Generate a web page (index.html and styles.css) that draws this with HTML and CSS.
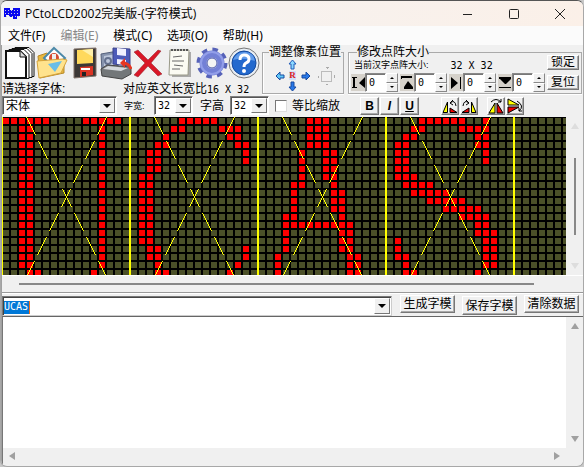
FILE: index.html
```html
<!DOCTYPE html>
<html lang="zh-CN">
<head>
<meta charset="utf-8">
<title>PCtoLCD2002完美版-(字符模式)</title>
<link rel="stylesheet" href="styles.css">
</head>
<body>
<div class="window">
  <header class="titlebar">
    <svg class="app-icon" width="16" height="13" viewBox="0 0 16 13" shape-rendering="crispEdges" aria-hidden="true">
      <path fill="#0808f0" d="M0 1h6v7H2v2H0zM5 3h5v7H5zM9 1h7v8h-3v3H9z"/>
      <path stroke="#ccd" stroke-width="1" stroke-dasharray="1 2" d="M1 3.500h14M1 6.500h14M2 9.500h13"/>
    </svg>
    <h1>PCtoLCD2002完美版-(字符模式)</h1>
    <div class="caption-buttons">
      <button aria-label="最小化"><svg width="12" height="12"><path d="M1 6.500h9"/></svg></button>
      <button aria-label="最大化"><svg width="12" height="12"><rect x="1.500" y="1.500" width="9" height="9" rx="1"/></svg></button>
      <button aria-label="关闭"><svg width="12" height="12"><path d="M1 1l10 10M11 1L1 11"/></svg></button>
    </div>
  </header>
  <nav class="menubar">
    <button>文件(F)</button><button disabled>编辑(E)</button><button>模式(C)</button><button>选项(O)</button><button>帮助(H)</button>
  </nav>

  <main class="client">
    <section class="tools">
      <div class="tools-left">
        <div class="icon-row">
          <button aria-label="新建"><svg viewBox="0 0 32 34"><g fill="#fff" stroke="#111"><path d="M11 1.500h14l5 5v24H11z"/><path d="M8 2.500h15l5 5v24H8z"/><path d="M5 3.500h15l5 5v24H5z"/><path stroke-width="2" d="M2 5h14l6 6v21H2z"/><path fill="#ddd" d="M16 5v6h6"/></g></svg></button>
          <button aria-label="打开"><svg viewBox="0 0 32 34"><path fill="#e8b840" stroke="#b88a28" d="M2 10l9-3 3 3h12l2 3v14L4 32z"/><path fill="#fff" stroke="#4c89a8" stroke-width="2" d="M18 2l11 10-11 11L8 12z"/><circle cx="18" cy="12" r="5" fill="#d64c32"/><path fill="#eee" d="M16 8h4v8h-4z"/><path fill="#ffe38d" stroke="#d5a33c" d="M1 15l26-2 4 1-6 13-22 5z"/><path fill="#69bde8" d="M12 18l14-3-7 11z"/></svg></button>
          <button aria-label="保存"><svg viewBox="0 0 32 34"><path fill="#3c3836" stroke="#81736a" d="M6 3l22-1v28L6 32z"/><path fill="#ffd95c" d="M9 4l16-1v14l-16 1z"/><path fill="#fff0a8" d="M14 4l11-1v8z"/><path fill="#db3424" d="M12 21l13-1v9l-13 2z"/><path fill="#fff" d="M13 22h9v2h-9z"/><path fill="#222" d="M14 26h4v4h-4z"/></svg></button>
          <button aria-label="另存"><svg viewBox="0 0 32 34"><path fill="#8794ae" stroke="#55617c" d="M1 8l17-3v18L2 25z"/><path fill="#bdc7db" d="M4 10l12-2v12L4 22z"/><circle cx="8" cy="15" r="3" fill="none" stroke="#64718f" stroke-width="2"/><path fill="#737779" stroke="#444" d="M1 23l6-4 24 2v7l-9 5-20-3z"/><path fill="#d5d9dd" d="M3 23l5-3 20 2-7 3z"/><path fill="#4d5bb9" stroke="#3b438b" d="M13 2l17 1v17l-17-2z"/><path fill="#f0f0ff" d="M17 2l9 1v7l-9-1zM17 13l9 1v5l-9-1z"/><path fill="none" stroke="#e73722" stroke-width="3" d="M31 23q-2-6-9-6"/><path fill="#e73722" d="M20 17l5-5v10z"/></svg></button>
          <button aria-label="删除"><svg viewBox="0 0 32 34"><path fill="#d91828" stroke="#8c2028" stroke-width=".5" d="M2 6l4-2 10 10L26 4l3 1-10 12 11 11-4 2-10-10L6 31l-4-2 11-12z"/></svg></button>
          <button aria-label="预览"><svg viewBox="0 0 32 34"><path fill="#aaa" d="M8 6h19v25H8z"/><path fill="#fbfbf3" stroke="#998" d="M6 4h19l-1 25H5z"/><path fill="none" stroke="#555" stroke-width="2" stroke-dasharray="2 1" d="M7 4h17"/><path stroke="#666" d="M9 11l9-1M8 15h12M10 19l9 1M8 23h8"/></svg></button>
          <button aria-label="设置"><svg viewBox="0 0 32 34"><circle cx="16" cy="17" r="13" fill="none" stroke="#5662b8" stroke-width="5" stroke-dasharray="5.210 5"/><circle cx="16" cy="17" r="9" fill="none" stroke="#7380d6" stroke-width="7"/><circle cx="16" cy="17" r="11" fill="none" stroke="#929ee9" stroke-width="2"/><circle cx="16" cy="17" r="5" fill="#f4f4f4" stroke="#4b59ac"/></svg></button>
          <button aria-label="帮助"><svg viewBox="0 0 32 34"><circle cx="16" cy="17" r="15" fill="#e7edf4" stroke="#777"/><circle cx="16" cy="17" r="12" fill="#2369ce" stroke="#144a9f"/><path fill="#619bea" d="M5 14Q9 5 18 6q8 1 9 9-12-4-22-1z"/><path fill="none" stroke="#fff" stroke-width="3" d="M12 14q0-5 4-5 5 0 5 4 0 3-3 4-2 1-2 4"/><circle cx="16" cy="25" r="2" fill="#fff"/></svg></button>
        </div>
        <div class="label-row"><label for="font">请选择字体:</label><span>对应英文长宽比<span class="digits">16 X 32</span></span></div>
        <div class="select-row">
          <span class="combo combo-font"><select id="font"><option>宋体</option></select><i class="drop"></i></span>
          <label class="small" for="cw">字宽:</label>
          <span class="combo combo-size"><select id="cw" class="digits"><option>32</option></select><i class="drop"></i></span>
          <label class="high" for="ch">字高</label>
          <span class="combo combo-size"><select id="ch" class="digits"><option>32</option></select><i class="drop"></i></span>
        </div>
      </div>

      <div class="tools-right">
        <div class="groups">
          <fieldset class="position">
            <legend>调整像素位置</legend>
            <div class="position-body">
              <div class="pad">
                <button class="up" aria-label="上移"><svg width="9" height="11"><path fill="#8bd8ff" stroke="#205bb8" d="M4.500 1L8 5H6v5H3V5H1z"/></svg></button>
                <button class="left" aria-label="左移"><svg width="10" height="10"><path fill="#60c8f8" stroke="#174aa0" d="M1 5l4-4v3h4v3H5v2z"/></svg></button>
                <button class="reset" aria-label="重置">R</button>
                <button class="right" aria-label="右移"><svg width="10" height="10"><path fill="#2878e8" stroke="#174aa0" d="M9 5L5 1v3H1v3h4v2z"/></svg></button>
                <button class="down" aria-label="下移"><svg width="9" height="11"><path fill="#2878e8" stroke="#174aa0" d="M4.500 10L1 6h2V1h3v5h2z"/></svg></button>
              </div>
              <svg width="20" height="20" shape-rendering="crispEdges"><rect x="4.500" y="5.500" width="10" height="10" fill="none" stroke="#bbb"/><path fill="#aaa" d="M8 1h4l-2 2zM9 18h2v1H9zM1 10h1v2H1zM17 9h1v3h-1z"/></svg>
            </div>
          </fieldset>
          <fieldset class="matrix">
            <legend>修改点阵大小</legend>
            <div class="matrix-main">
              <div class="matrix-info"><span class="small">当前汉字点阵大小:</span><span class="digits">32 X 32</span></div>
              <div class="spinners">
                <div class="spinner"><svg width="14" height="17"><path d="M1 3h5v1H4v9h2v1H1v-1h1V4H1zM14 3v11L8 9z"/></svg><input aria-label="左" class="digits" value="0"><span class="spin"><button aria-label="左加"></button><button aria-label="左减"></button></span></div>
                <div class="spinner"><svg width="14" height="17"><path d="M1 2h11v2H2v1H1zM8 7l5 6v2H4v-2z"/></svg><input aria-label="上" class="digits" value="0"><span class="spin"><button aria-label="上加"></button><button aria-label="上减"></button></span></div>
                <div class="spinner"><svg width="14" height="17"><path d="M2 3l7 6-7 6zM11 3h1v12h-1z"/></svg><input aria-label="右" class="digits" value="0"><span class="spin"><button aria-label="右加"></button><button aria-label="右减"></button></span></div>
                <div class="spinner"><svg width="14" height="17"><path d="M1 3h12v2l-5 5H7L2 5H1zM1 13h12v1H1z"/></svg><input aria-label="下" class="digits" value="0"><span class="spin"><button aria-label="下加"></button><button aria-label="下减"></button></span></div>
              </div>
            </div>
            <div class="matrix-actions"><button class="btn">锁定</button><button class="btn">复位</button></div>
          </fieldset>
        </div>
        <div class="format-row">
          <label class="scale"><input type="checkbox">等比缩放</label>
          <div class="styles"><button class="btn"><b>B</b></button><button class="btn"><i>I</i></button><button class="btn"><u>U</u></button></div>
          <div class="pair">
            <button class="btn" aria-label="左旋"><svg width="16" height="16"><path fill="#ff0" stroke="#000" d="M1 14.500L5.500 4v10.500z"/><path fill="#e00" stroke="#000" d="M8 14.500V10l7 4.500z"/><path fill="none" stroke="#000" d="M8 5q5-4 6 3M11 2L8 5l3 2"/></svg></button>
            <button class="btn" aria-label="右旋"><svg width="16" height="16"><path fill="#ff0" stroke="#000" d="M15 14.500L10.500 4v10.500z"/><path fill="#e00" stroke="#000" d="M8 14.500V10l-7 4.500z"/><path fill="none" stroke="#000" d="M8 5Q3 1 2 8M5 2l3 3-3 2"/></svg></button>
          </div>
          <div class="pair">
            <button class="btn" aria-label="左右翻转"><svg width="16" height="16"><path fill="#ff0" stroke="#000" d="M1 15L7 5v10z"/><path fill="#e00" stroke="#000" d="M15 15L9 5v10z"/><path fill="none" stroke="#000" d="M3 4q5-5 10 0M13 1v3h-3"/></svg></button>
            <button class="btn" aria-label="上下翻转"><svg width="16" height="16"><path fill="#ff0" stroke="#000" d="M1 1l11 6H1z"/><path fill="#e00" stroke="#000" d="M1 15l11-6H1z"/><path fill="none" stroke="#000" d="M10 3q8 5 2 10M12 10v3h3"/></svg></button>
          </div>
        </div>
      </div>
    </section>

    <section class="preview">
      <svg id="lcd" class="lcd" shape-rendering="crispEdges" role="img" aria-label="UCAS 点阵"></svg>
      <div class="vscroll faint"><i class="tri up-tri"></i><div class="vthumb"></div><i class="tri down-tri"></i></div>
    </section>
    <div class="hscroll-thin"><div class="hthumb"></div></div>

    <section class="entry">
      <div class="text-combo"><label class="caret-text"><input class="digits" id="text" value="UCAS" size="4" aria-label="文字"></label><button class="arrow-button" aria-label="历史"><i class="drop-tri"></i></button></div>
      <button class="btn action">生成字模</button>
      <button class="btn action lower">保存字模</button>
      <button class="btn action">清除数据</button>
    </section>

    <section class="output">
      <textarea aria-label="字模数据"></textarea>
      <div class="vscroll"><i class="tri up-tri"></i><i class="tri down-tri"></i></div>
      <div class="hscroll"><i class="tri left-tri"></i><i class="tri right-tri"></i></div>
    </section>
  </main>
</div>
<script src="lcd.js"></script>
</body>
</html>
```
FILE: styles.css
```css
* { box-sizing: border-box; }
body {
  margin: 0;
  background: #c8c8c8;
  font: 12px/14px "Liberation Sans", "Noto Sans CJK SC", sans-serif;
  color: #000;
}
button, input, select, textarea { font: inherit; color: inherit; margin: 0; padding: 0; border: 0; border-radius: 0; background: none; }
button { display: grid; place-items: center; }
svg { display: block; }
.digits { font-family: "DejaVu Sans Mono", monospace; font-size: 10px; }
.small { font-size: 9px; }

.window {
  display: flex;
  flex-direction: column;
  min-height: 100vh;
  border: 1px solid #a8a8a8;
  border-top-color: #555;
  border-radius: 7px;
  overflow: hidden;
  background: #f0f0f0;
}
.titlebar { display: flex; align-items: center; height: 25px; padding-left: 3px; gap: 5px; background: linear-gradient(90deg, #f3f3f4, #fbf0e8); }
.titlebar h1 { flex: 1; margin: 0; font: 12px/20px "Open Sans", "Noto Sans CJK SC", sans-serif; white-space: nowrap; }
.caption-buttons { display: flex; }
.caption-buttons button { width: 46px; height: 24px; }
.caption-buttons svg { fill: none; stroke: #222; }
.menubar { display: flex; gap: 15px; height: 19px; padding-left: 7px; background: #fbfbfb; }
.menubar button { font-family: "Noto Sans", "Noto Sans CJK SC", sans-serif; white-space: nowrap; }
.menubar button:disabled { color: #888; }

.client { flex: 1; display: flex; flex-direction: column; border-left: 1px solid #a0a0a0; }
.tools { display: flex; height: 72px; }
.tools-left { width: 260px; flex: none; }
.icon-row { display: flex; height: 36px; padding-left: 2px; }
.icon-row button { width: 32px; height: 36px; }
.icon-row svg { width: 32px; height: 34px; }
.label-row { display: flex; height: 15px; gap: 56px; padding-top: 1px; white-space: nowrap; }
.label-row > :first-child { width: 65px; }
.select-row { display: flex; align-items: center; height: 19px; }
.select-row > * { flex: none; }
.select-row .small, .select-row .high { width: 37px; padding-left: 7px; white-space: nowrap; }
.combo { display: grid; height: 19px; background: #fff; border: 1px solid; border-color: #808080 #fff #fff #808080; box-shadow: inset 1px 1px #555; }
.combo > * { grid-area: 1 / 1; }
.combo select { appearance: none; width: 100%; padding-left: 3px; }
.combo-font { width: 115px; }
.combo-size { width: 39px; }
.drop { pointer-events: none; justify-self: end; width: 16px; margin: 1px; background: #f0f0f0; border: 1px solid; border-color: #fff #777 #777 #fff; display: grid; place-items: center; }
.drop::after, .drop-tri { content: ""; border: 4px solid transparent; border-top-color: #000; border-bottom: 0; }

.tools-right { flex: 1; min-width: 0; }
.groups { display: flex; gap: 4px; height: 49px; }
fieldset { margin: 0; padding: 0 2px; min-width: 0; border: 1px solid #aaa; box-shadow: inset 1px 0 #fff, 0 1px #fff; }
legend { margin-left: 6px; padding: 0; height: 14px; white-space: nowrap; }
.position { width: 82px; flex: none; }
.position legend { margin-left: 4px; }
.position-body { display: flex; align-items: center; gap: 5px; padding-left: 8px; }
.pad { display: grid; grid-template: 11px 11px 11px / 13px 13px 13px; place-items: center; }
.up { grid-area: 1 / 2; }
.left { grid-area: 2 / 1; }
.reset { grid-area: 2 / 2; font: bold 9px/9px "Liberation Serif", serif; color: #d22; background: #cfe0fa; }
.right { grid-area: 2 / 3; }
.down { grid-area: 3 / 2; }
.matrix { flex: 1; display: grid; grid-template-columns: 1fr 32px; margin-right: 1px; }
.matrix-main { min-width: 0; }
.matrix-info { display: flex; height: 14px; gap: 22px; padding-left: 3px; white-space: nowrap; }
.matrix-info .small { line-height: 12px; }
.spinners { display: flex; justify-content: space-between; padding-right: 1px; }
.spinner { display: flex; align-items: center; height: 19px; width: 48px; }
.spinner svg { background: #d5d1ca; }
.spinner input { width: 21px; height: 19px; padding-left: 3px; background: #fff; border: 1px solid #888; border-right-color: #fff; border-bottom-color: #fff; box-shadow: inset 1px 1px #777; }
.spin { display: grid; width: 12px; height: 19px; }
.spin button { border: 1px solid; border-color: #fff #888 #888 #fff; background: #f0f0f0; }
.spin button::after { content: ""; border: 2px solid transparent; border-bottom-color: #000; border-top: 0; }
.spin button:last-child::after { border-top: 2px solid #000; border-bottom: 0; }
.matrix-actions { display: grid; align-content: start; gap: 5px; margin-top: -4px; }
.btn { background: #f0f0f0; border: 1px solid; border-color: #fff #777 #777 #fff; box-shadow: inset -1px -1px #aaa; white-space: nowrap; overflow: hidden; }
.matrix-actions .btn { height: 15px; line-height: 13px; }
.format-row { display: flex; align-items: center; height: 23px; }
.scale { display: flex; align-items: center; gap: 5px; width: 98px; padding-left: 13px; white-space: nowrap; }
.scale input { appearance: none; width: 12px; height: 12px; background: #fff; border: 1px solid; border-color: #777 #ddd #ddd #777; }
.styles { display: flex; gap: 1px; width: 81px; }
.styles .btn { width: 19px; height: 18px; font-weight: bold; }
.pair { display: flex; gap: 1px; width: 46px; }
.pair .btn { width: 18px; height: 18px; }

.preview { display: grid; grid-template-columns: 1fr 17px; height: 158px; }
.lcd { width: 100%; height: 158px; background: #000; }
.vscroll { display: flex; flex-direction: column; align-items: center; justify-content: space-between; padding: 6px 0; background: #f0f0f0; }
.tri { border: 4px solid transparent; }
.up-tri { border-top: 0; border-bottom: 6px solid #a0a0a0; }
.down-tri { border-bottom: 0; border-top: 6px solid #a0a0a0; }
.left-tri { border-left: 0; border-right: 6px solid #a0a0a0; }
.right-tri { border-right: 0; border-left: 6px solid #a0a0a0; }
.faint .tri { border-bottom-color: #ddd; }
.faint .down-tri { border-top-color: #ddd; }
.vthumb { width: 2px; height: 77px; background: #888; }
.hscroll-thin { height: 18px; border-top: 1px solid #fff; border-bottom: 1px solid #999; padding: 7px 49px 0 17px; }
.hthumb { height: 2px; background: #888; }

.entry { display: flex; align-items: flex-start; height: 23px; padding: 1px 4px 0 0; border-top: 1px solid #fff; gap: 7px; }
.text-combo { flex: 1; display: flex; justify-content: space-between; height: 20px; margin: 1px 1px 0 0; background: #fff; border: 1px solid #777; border-right-color: #ccc; border-bottom-color: #ccc; box-shadow: inset 1px 1px #444; }
.caret-text { padding: 2px 1px; }
.caret-text input { width: 26px; height: 13px; background: #0078d7; color: #fff; border-right: 1px solid #f07020; }
.arrow-button { width: 16px; margin: 1px; background: #f0f0f0; border: 1px solid; border-color: #fff #777 #777 #fff; }
.action { width: 55px; height: 18px; flex: none; line-height: 16px; }
.lower { margin-top: 1px; height: 19px; }

.output { flex: 1; display: grid; grid-template: 1fr 16px / 1fr 17px; min-height: 100px; border-top: 1px solid #666; border-left: 1px solid #777; background: #f0f0f0; margin-bottom: 2px; }
.output textarea { display: block; width: 100%; height: 100%; min-height: 0; background: #fff; resize: none; overflow: hidden; }
.hscroll { display: flex; align-items: center; justify-content: space-between; padding: 0 6px; }
```
FILE: lcd.js
```javascript
// Lit columns of every visible row, one list per character.
const glyphs = [
  ["0-5,10-14", ...Array(18).fill("2-3,12"), "3-4,11"],
  ["6-10", "5-6,11-13", "4,12-13", "3-4,13-14", "2-3,14", "2-3,14", "2-3",
    ...Array(9).fill("1-2"), "2-3,14", "2-3,14", "3,13", "3-4,12"],
  ["6-8", "6-8", "6-8", "6-8", "5,8-9", "5,8-9", "5,8-9", "5,8-9", "4-5,9",
    "4,9-10", "4,9-10", "4,9-10", "3-4,10", "3-11", "3,10-11", "3,10-11",
    "3,10-11", "2,11-12", "2,11-12", "2,11-12"],
  ["4-9,12", "3-4,9-12", "2-3,11-12", "1-2,11-12", "1-2,12", "1-2,12", "1-2",
    "1-3", "2-5", "3-7", "5-9", "7-11", "9-12", "11-12", "11-13", "1,12-13",
    "1,12-13", "1-2,12-13", "2,12-13", "2-3,11"]
];
const pitch = 8;
const charWidth = 16 * pitch;
const ns = "http://www.w3.org/2000/svg";
const lcd = document.getElementById("lcd");

function addPath(d, attrs) {
  const path = document.createElementNS(ns, "path");
  path.setAttribute("d", d);
  for (const [name, value] of Object.entries(attrs)) path.setAttribute(name, value);
  lcd.append(path);
}
const cell = (col, row) => `M${1 + col * pitch} ${1 + row * pitch}h6v6h-6z`;

let off = "";
for (let row = 0; row < 20; row++)
  for (let col = 0; col < 240; col++) off += cell(col, row);
addPath(off, { fill: "#4b5028" });

let on = "";
glyphs.forEach((rows, g) => rows.forEach((spec, row) => {
  for (const run of spec.split(",")) {
    const [from, to = from] = run.split("-").map(Number);
    for (let col = from; col <= to; col++) on += cell(g * 16 + col, row);
  }
}));
addPath(on, { fill: "#f00" });

addPath("M0 0h1v158h-1z", { fill: "#ff0" });
glyphs.forEach((_, g) => {
  const x = g * charWidth;
  addPath(`M${x + 24.5} 0l79 158M${x + 104.5} 0l-79 158`,
    { fill: "none", stroke: "#ff0", "stroke-dasharray": "20.125 6.708" });
  addPath(`M${x + charWidth - 1} 0h2v158h-2z`, { fill: "#ff0" });
});
```
